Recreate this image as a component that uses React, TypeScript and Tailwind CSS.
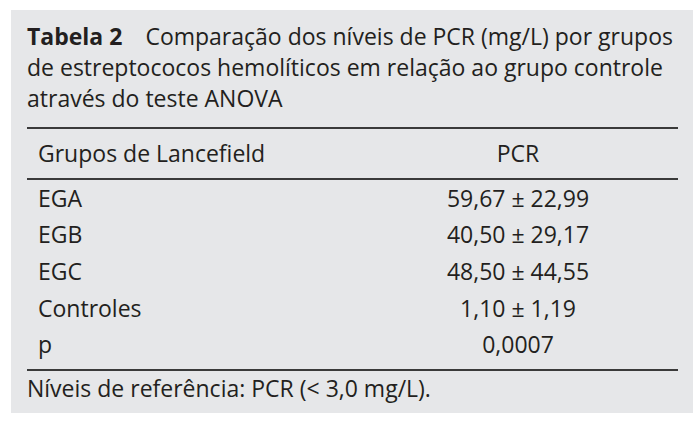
const rows = [
  { group: 'EGA', value: '59,67 ± 22,99' },
  { group: 'EGB', value: '40,50 ± 29,17' },
  { group: 'EGC', value: '48,50 ± 44,55' },
  { group: 'Controles', value: '1,10 ± 1,19' },
  { group: 'p', value: '0,0007' },
];

export default function App() {
  return (
    <div className="w-[700px] h-[428px] bg-white pt-[10px] pl-[11px]" style={{ fontFamily: '"Open Sans", sans-serif' }}>
      <div className="w-[682px] h-[403px] bg-[#e6e7e9] pl-[16px] pr-[15px] pt-[11px] text-[#231f20]">
        <p className="text-[23px] leading-[31px]">
          <span className="font-bold">Tabela 2</span>
          <span className="ml-[23px]">Comparação dos níveis de PCR (mg/L) por grupos de estreptococos hemolíticos em relação ao grupo controle através do teste ANOVA</span>
        </p>

        <table className="w-full mt-[13px] text-[23px] border-collapse">
          <thead>
            <tr className="border-y-2 border-[#3a3a3a] h-[51px]">
              <th className="font-normal text-left pl-[11px] w-[331px]">Grupos de Lancefield</th>
              <th className="font-normal text-center">PCR</th>
            </tr>
          </thead>
          <tbody>
            {rows.map((r, i) => (
              <tr key={r.group} className={i === rows.length - 1 ? 'h-[43px] border-b-2 border-[#3a3a3a] align-top' : 'h-[37px]'}>
                <td className="pl-[11px]">{r.group}</td>
                <td className="text-center">{r.value}</td>
              </tr>
            ))}
          </tbody>
        </table>

        <p className="text-[23px] mt-[2px] leading-[31px]">Níveis de referência: PCR (&lt; 3,0 mg/L).</p>
      </div>
    </div>
  );
}
